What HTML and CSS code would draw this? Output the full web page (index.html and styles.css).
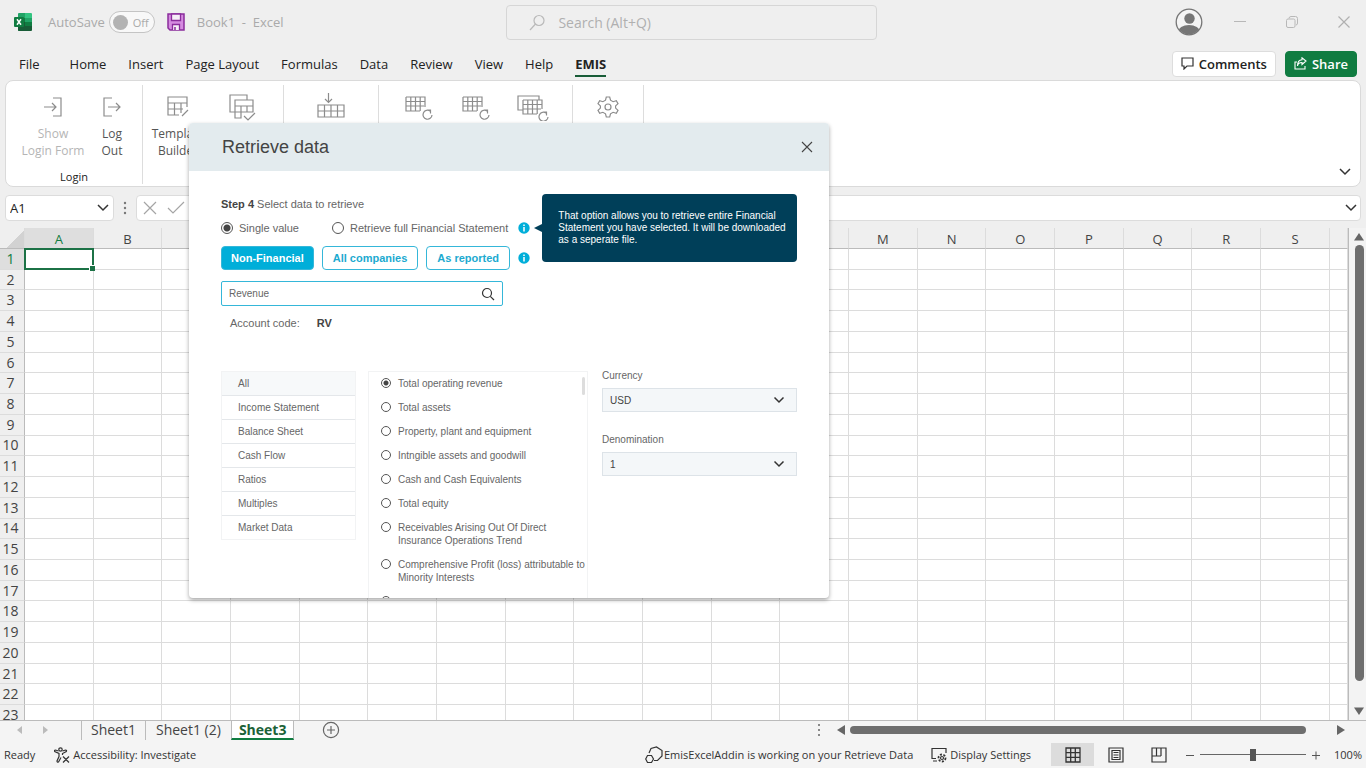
FILE: index.html
```html
<!DOCTYPE html>
<html lang="en">

    <head>
        <meta charset="UTF-8">
        <meta name="viewport" content="width=device-width, initial-scale=1.0">
        <title>Book1 - Excel</title>
        <link rel="stylesheet" href="styles.css">
    </head>

    <body>
        <header class="titlebar">
            <svg class="logo" width="18" height="18" viewBox="0 0 18 18">
                <path d="M5 0h6v18H5a1 1 0 0 1-1-1V1a1 1 0 0 1 1-1z" fill="#21a366"/>
                <path d="M11 0h6a1 1 0 0 1 1 1v4h-7z" fill="#33c481"/>
                <path d="M4 5h7v4H4z" fill="#107c41"/>
                <path d="M11 5h7v4h-7z" fill="#21a366"/>
                <path d="M4 9h7v9H5a1 1 0 0 1-1-1z" fill="#185c37"/>
                <path d="M11 9h7v4h-7z" fill="#107c41"/>
                <path d="M11 13h7v4a1 1 0 0 1-1 1h-6z" fill="#185c37"/>
                <rect y="4" width="10" height="10" rx="1" fill="#107c41"/>
                <path d="M3 6.200l4 5.600M7 6.200l-4 5.600" stroke="#fff" stroke-width="1.500"/>
            </svg>
            <span class="autosave">AutoSave</span>
            <button class="toggle" aria-label="Turn AutoSave on"><span class="knob"></span>Off</button>
            <button class="save" aria-label="Save">
                <svg width="18" height="18" viewBox="0 0 18 18">
                    <path d="M1 1h16v16H3l-2-2z" fill="#d58be0" stroke="#8b2d9c" stroke-width="1.500"/>
                    <path d="M4.500 1h9v6.500h-9z" fill="#f6eef7" stroke="#8b2d9c" stroke-width="1.300"/>
                    <path d="M5.500 17v-5.500h7V17" fill="#f6eef7" stroke="#8b2d9c" stroke-width="1.300"/>
                    <path d="M8 14v3" stroke="#8b2d9c" stroke-width="1.500"/>
                </svg>
            </button>
            <span class="book">Book1&nbsp; - &nbsp;Excel</span>
            <label class="search">
                <svg width="17" height="17" viewBox="0 0 17 17" fill="none" stroke="#b9b9b9" stroke-width="1.200">
                    <circle cx="10" cy="6.500" r="5"/>
                    <path d="M6.500 10L1 16"/>
                </svg>
                <input type="search" placeholder="Search (Alt+Q)" aria-label="Search">
            </label>
            <div class="window">
                <button aria-label="Account">
                    <svg width="28" height="28" viewBox="0 0 28 28">
                        <clipPath id="face"><circle cx="14" cy="14" r="12.500"/></clipPath>
                        <circle cx="14" cy="14" r="12.800" fill="#f4f4f4" stroke="#767676" stroke-width="1.300"/>
                        <circle cx="14.500" cy="10.500" r="5.200" fill="#767676"/>
                        <ellipse cx="14" cy="24" rx="11" ry="7" fill="#767676" clip-path="url(#face)"/>
                    </svg>
                </button>
                <button aria-label="Minimize"><svg width="12" height="12" viewBox="0 0 12 12" stroke="#b8b8b8"><path d="M0 5.500h12"/></svg></button>
                <button aria-label="Restore">
                    <svg width="12" height="12" viewBox="0 0 12 12" fill="none" stroke="#b8b8b8">
                        <rect x=".5" y="3" width="8.500" height="8.500" rx="1.500"/>
                        <path d="M3 2.500Q3 .5 5 .5h4.500q2 0 2 2V7q0 2-1.500 2"/>
                    </svg>
                </button>
                <button aria-label="Close"><svg width="12" height="12" viewBox="0 0 12 12" stroke="#b0b0b0" stroke-width="1.200"><path d="M.5.5l11 11M11.500.5l-11 11"/></svg></button>
            </div>
        </header>

        <nav class="tabs">
            <a href="#" class="file">File</a>
            <a href="#">Home</a>
            <a href="#">Insert</a>
            <a href="#">Page Layout</a>
            <a href="#">Formulas</a>
            <a href="#">Data</a>
            <a href="#">Review</a>
            <a href="#">View</a>
            <a href="#">Help</a>
            <a href="#" class="current">EMIS</a>
            <button class="comments">
                <svg width="13" height="13" viewBox="0 0 13 13" fill="none" stroke="#333" stroke-width="1.200"><path d="M1 1h11v8H6l-3 3V9H1z"/></svg>
                Comments
            </button>
            <button class="share">
                <svg width="13" height="13" viewBox="0 0 13 13" fill="none" stroke="#fff" stroke-width="1.100"><path d="M3 5H1v7h10V9M3.500 9Q4 5.500 8 5.500V7.500L12 4 8 .8V2.800Q3.500 3 3.500 9z"/></svg>
                Share
            </button>
        </nav>

        <section class="ribbon">
            <div class="group login">
                <div class="tools">
                    <button class="tool wide" disabled>
                        <svg width="28" height="28" viewBox="0 0 28 28"><path d="M14 5h8v18h-8M5 14h12M13 10l4 4-4 4"/></svg>
                        Show<br>Login Form
                    </button>
                    <button class="tool slim">
                        <svg width="28" height="28" viewBox="0 0 28 28"><path d="M14 5H6v18h8M10 14h12M18 10l4 4-4 4"/></svg>
                        Log<br>Out
                    </button>
                </div>
                <div class="name">Login</div>
            </div>
            <div class="group">
                <div class="tools">
                    <button class="tool">
                        <svg width="28" height="28" viewBox="0 0 28 28"><path d="M4 4h19v6H4zM4 10v12h11M4 16h15M10.500 10v12M17 10v10M23 10v4M18 23l6-6"/></svg>
                        Template<br>Builder
                    </button>
                    <button class="tool" aria-label="Templates">
                        <svg width="28" height="28" viewBox="0 0 28 28"><path d="M7 19H2V2h17v5M7 7h18v6H7zM7 13v6h18v-6M13 13v6M19 13v6M7 19v6h6v-6M16 23l4 4 7-7"/></svg>
                    </button>
                </div>
            </div>
            <div class="group">
                <div class="tools">
                    <button class="tool" aria-label="Retrieve data">
                        <svg width="28" height="28" viewBox="0 0 28 28"><path d="M1 12h26v12H1zM1 18h26M7.500 12v12M14 12v12M20.500 12v12M11.500 0v9M8 6l3.500 3.500L15 6"/></svg>
                    </button>
                </div>
            </div>
            <div class="group">
                <div class="tools">
                    <button class="tool mid" aria-label="Refresh cell">
                        <svg width="28" height="28" viewBox="0 0 28 28"><path d="M1 4h19v10M1 4v14h14M1 8.500h19M1 13h18M5.800 4v14M10.500 4v14M15.200 4v14M25 18a4.500 4.500 0 1 0 2 4M22 17h3.500v3.500"/></svg>
                    </button>
                    <button class="tool mid" aria-label="Refresh sheet">
                        <svg width="28" height="28" viewBox="0 0 28 28"><path d="M1 4h19v10M1 4v14h14M1 8.500h19M1 13h18M5.800 4v14M10.500 4v14M15.200 4v14M25 18a4.500 4.500 0 1 0 2 4M22 17h3.500v3.500"/></svg>
                    </button>
                    <button class="tool mid" aria-label="Refresh workbook">
                        <svg width="32" height="28" viewBox="0 0 32 28"><path d="M6 17H1V3h21v4M6 7h19v9M6 7v14h14M6 11.500h19M6 16h18M10.800 7v14M15.500 7v14M20.200 7v14M29 20a4.500 4.500 0 1 0 2 4M26 19h3.500v3.500"/></svg>
                    </button>
                </div>
            </div>
            <div class="group">
                <div class="tools">
                    <button class="tool" aria-label="Settings">
                        <svg class="gear" width="28" height="28" viewBox="0 0 28 28"><circle cx="14" cy="14" r="3"/><path d="M12.300 4h3.400l.8 3.200 2.600 1.500 3.200-1 1.700 3-2.400 2.200v2.200l2.400 2.200-1.700 3-3.200-1-2.600 1.500-.8 3.200h-3.400l-.8-3.200-2.600-1.500-3.200 1-1.700-3 2.400-2.200v-2.200L4 10.700l1.700-3 3.200 1 2.600-1.500z"/></svg>
                    </button>
                </div>
            </div>
            <button class="collapse" aria-label="Collapse ribbon"><svg width="12" height="8" viewBox="0 0 12 8" fill="none" stroke="#333" stroke-width="1.500"><path d="M1 1l5 5 5-5"/></svg></button>
        </section>

        <section class="formula">
            <label class="namebox">
                <input type="text" value="A1" aria-label="Name box">
                <svg width="12" height="8" viewBox="0 0 12 8" fill="none" stroke="#333" stroke-width="1.500"><path d="M1 1l5 5 5-5"/></svg>
            </label>
            <svg width="4" height="14" viewBox="0 0 4 14" fill="#777"><circle cx="2" cy="2" r="1.200"/><circle cx="2" cy="7" r="1.200"/><circle cx="2" cy="12" r="1.200"/></svg>
            <div class="fx">
                <button aria-label="Cancel"><svg width="14" height="14" viewBox="0 0 14 14" fill="none" stroke="#a5a5a5" stroke-width="1.200"><path d="M1 1l12 12M13 1L1 13"/></svg></button>
                <button aria-label="Enter"><svg width="18" height="14" viewBox="0 0 18 14" fill="none" stroke="#a5a5a5" stroke-width="1.200"><path d="M1 7l5 5L17 1"/></svg></button>
                <input type="text" aria-label="Formula bar">
                <svg width="12" height="8" viewBox="0 0 12 8" fill="none" stroke="#333" stroke-width="1.500"><path d="M1 1l5 5 5-5"/></svg>
            </div>
        </section>

        <main class="sheet">
            <div class="cells">
                <table id="grid"></table>
            </div>
            <div class="vscroll">
                <svg width="10" height="8" viewBox="0 0 10 8"><path d="M5 0l5 7.500H0z"/></svg>
                <div class="bar"></div>
                <svg width="10" height="8" viewBox="0 0 10 8"><path d="M0 .5h10L5 8z"/></svg>
            </div>
        </main>

        <section class="sheets">
            <div class="arrows">
                <svg width="6" height="8" viewBox="0 0 6 8"><path d="M5 0v8L0 4z"/></svg>
                <svg width="6" height="8" viewBox="0 0 6 8"><path d="M1 0v8l5-4z"/></svg>
            </div>
            <button class="page">Sheet1</button>
            <button class="page">Sheet1 (2)</button>
            <button class="page active">Sheet3</button>
            <button class="add" aria-label="New sheet"><svg width="18" height="18" viewBox="0 0 18 18" fill="none" stroke="#666" stroke-width="1.200"><circle cx="9" cy="9" r="7.600"/><path d="M9 5v8M5 9h8"/></svg></button>
            <div class="hscroll">
                <svg width="4" height="14" viewBox="0 0 4 14"><circle cx="2" cy="2" r="1"/><circle cx="2" cy="7" r="1"/><circle cx="2" cy="12" r="1"/></svg>
                <svg class="prev" width="8" height="10" viewBox="0 0 8 10"><path d="M8 0v10L0 5z"/></svg>
                <div class="bar"></div>
                <svg class="next" width="8" height="10" viewBox="0 0 8 10"><path d="M0 0v10l8-5z"/></svg>
            </div>
        </section>

        <footer class="status">
            <span>Ready</span>
            <span class="access">
                <svg width="16" height="16" viewBox="0 0 16 16" fill="none" stroke="#333" stroke-width="1.200"><circle cx="6.500" cy="2.500" r="1.700"/><path d="M4.500 4L1.500 3q-1.500 0-.8 1.500L5 6.500v3L3 14q0 1.500 1.500 1L7 10.500M8.500 4l3-1q1.500 0 .8 1.500L8.500 6.500V8M9 9.500l6 6M15 9.500l-6 6"/></svg>
                Accessibility: Investigate
            </span>
            <span class="addin">
                <svg width="18" height="18" viewBox="0 0 18 18" fill="none" stroke="#333" stroke-width="1.200"><path d="M4 7l2-4.500L11.500 1 17 4.500V10l-4.500 4.500H9"/><path d="M2.500 9.500h4L8.500 13l-2 3.500h-4L.7 13z"/></svg>
                EmisExcelAddin is working on your Retrieve Data
            </span>
            <span class="display">
                <svg width="16" height="16" viewBox="0 0 16 16" fill="none" stroke="#333" stroke-width="1.200"><path d="M5 11.500H1v-10h14V6M2 14h4"/><circle cx="11" cy="11" r="3.500" stroke-width="1.800" stroke-dasharray="2 1.500"/><circle cx="11" cy="11" r="1.500"/></svg>
                Display Settings
            </span>
            <button class="view on" aria-label="Normal"><svg width="16" height="16" viewBox="0 0 16 16" fill="none" stroke="#333" stroke-width="1.300"><path d="M1 1h14v14H1zM1 5.700h14M1 10.300h14M5.700 1v14M10.300 1v14"/></svg></button>
            <button class="view" aria-label="Page layout"><svg width="16" height="16" viewBox="0 0 16 16" fill="none" stroke="#333" stroke-width="1.200"><path d="M1 1h14v14H1zM4 3.500h8v9H4zM5.500 5.500h5M5.500 8h5M5.500 10.500h5"/></svg></button>
            <button class="view" aria-label="Page break preview"><svg width="16" height="16" viewBox="0 0 16 16" fill="none" stroke="#333" stroke-width="1.200"><path d="M1 1h14v14H1zM5.500 1v8M10 1v8M1 9h9"/></svg></button>
            <button class="step" aria-label="Zoom out"><svg width="10" height="10" viewBox="0 0 10 10" stroke="#555"><path d="M1 5.500h8"/></svg></button>
            <input class="zoom" type="range" aria-label="Zoom">
            <button class="step" aria-label="Zoom in"><svg width="10" height="10" viewBox="0 0 10 10" stroke="#555"><path d="M1 5.500h8M5 1.500v8"/></svg></button>
            <span class="percent">100%</span>
        </footer>

        <div class="dialog" role="dialog" aria-labelledby="heading">
            <div class="head">
                <h1 id="heading">Retrieve data</h1>
                <button aria-label="Close dialog"><svg width="12" height="12" viewBox="0 0 12 12" stroke="#444" stroke-width="1.100"><path d="M1 1l10 10M11 1L1 11"/></svg></button>
            </div>
            <div class="content">
                <p class="steps"><b>Step 4</b> Select data to retrieve</p>
                <div class="modes">
                    <label class="mode"><input type="radio" name="mode" checked>Single value</label>
                    <label class="mode"><input type="radio" name="mode">Retrieve full Financial Statement</label>
                    <span class="info">
                        <svg width="12" height="12" viewBox="0 0 12 12"><circle cx="6" cy="6" r="5.700" fill="#00aed9"/><path d="M6 2.500v1.500M6 5v4.500" stroke="#fff" stroke-width="1.500"/></svg>
                        <span class="tooltip">That option allows you to retrieve entire Financial Statement you have selected. It will be downloaded as a seperate file.</span>
                    </span>
                </div>
                <div class="filters">
                    <button class="filter on">Non-Financial</button>
                    <button class="filter">All companies</button>
                    <button class="filter">As reported</button>
                    <svg width="12" height="12" viewBox="0 0 12 12"><circle cx="6" cy="6" r="5.700" fill="#00aed9"/><path d="M6 2.500v1.500M6 5v4.500" stroke="#fff" stroke-width="1.500"/></svg>
                </div>
                <label class="find">
                    <input type="text" value="Revenue" aria-label="Account">
                    <svg width="14" height="14" viewBox="0 0 14 14" fill="none" stroke="#333" stroke-width="1.200"><circle cx="6" cy="6" r="4.500"/><path d="M9.300 9.300l3.700 3.700"/></svg>
                </label>
                <p class="code">Account code: <b>RV</b></p>
                <div class="panels">
                    <ul class="cats">
                        <li><a href="#" class="on">All</a></li>
                        <li><a href="#">Income Statement</a></li>
                        <li><a href="#">Balance Sheet</a></li>
                        <li><a href="#">Cash Flow</a></li>
                        <li><a href="#">Ratios</a></li>
                        <li><a href="#">Multiples</a></li>
                        <li><a href="#">Market Data</a></li>
                    </ul>
                    <div class="accounts">
                        <label><input type="radio" name="acc" checked>Total operating revenue</label>
                        <label><input type="radio" name="acc">Total assets</label>
                        <label><input type="radio" name="acc">Property, plant and equipment</label>
                        <label><input type="radio" name="acc">Intngible assets and goodwill</label>
                        <label><input type="radio" name="acc">Cash and Cash Equivalents</label>
                        <label><input type="radio" name="acc">Total equity</label>
                        <label><input type="radio" name="acc">Receivables Arising Out Of Direct Insurance Operations Trend</label>
                        <label><input type="radio" name="acc">Comprehensive Profit (loss) attributable to Minority Interests</label>
                        <label><input type="radio" name="acc" aria-label="Next account"></label>
                        <div class="thumb"></div>
                    </div>
                    <div class="options">
                        <label for="currency">Currency</label>
                        <div class="select">
                            <select id="currency"><option>USD</option></select>
                            <svg width="12" height="8" viewBox="0 0 12 8" fill="none" stroke="#333" stroke-width="1.500"><path d="M1.500 1.500L6 6l4.500-4.500"/></svg>
                        </div>
                        <label for="denomination">Denomination</label>
                        <div class="select">
                            <select id="denomination"><option>1</option></select>
                            <svg width="12" height="8" viewBox="0 0 12 8" fill="none" stroke="#333" stroke-width="1.500"><path d="M1.500 1.500L6 6l4.500-4.500"/></svg>
                        </div>
                    </div>
                </div>
            </div>
        </div>

        <script>
        const grid = document.getElementById('grid')
        const cols = 'ABCDEFGHIJKLMNOPQRS'.split('')

        // column letters
        let head = '<tr><th class="corner"></th>'
        for (let i = 0; i < cols.length; i++) {
            head += `<th${i == 0 ? ' class="picked"' : ''}>${cols[i]}</th>`
        }
        head += '<th class="rest"></th></tr>'

        // numbered rows
        let rows = ''
        for (let r = 1; r <= 23; r++) {
            rows += `<tr><th${r == 1 ? ' class="picked"' : ''}>${r}</th>`
            for (let c = 0; c <= cols.length; c++) {
                rows += r == 1 && c == 0 ? '<td class="cell"><span></span></td>' : '<td></td>'
            }
            rows += '</tr>'
        }
        grid.innerHTML = `<thead>${head}</thead><tbody>${rows}</tbody>`
        </script>
    </body>

</html>
```
FILE: styles.css
```css
* {
    box-sizing: border-box;
}

body {
    margin: 0;
    height: 100vh;
    display: flex;
    flex-direction: column;
    overflow: hidden;
    position: relative;
    background-color: #efefef;
    color: #222;
    font-family: "Open Sans", "Noto Sans", sans-serif;
    font-size: 13px;
}

button,
input,
select {
    font: inherit;
    color: inherit;
    background: none;
    border: none;
    padding: 0;
    margin: 0;
    outline: none;
}

button {
    cursor: pointer;
}

a {
    color: inherit;
    text-decoration: none;
}

svg {
    display: block;
    flex: none;
}

/* title bar */
.titlebar {
    height: 44px;
    display: flex;
    align-items: center;
    padding: 0 16px 0 14px;
    color: #aaa;
    position: relative;
}

.autosave {
    margin: 0 4px 0 16px;
}

.toggle {
    width: 46px;
    height: 22px;
    display: flex;
    align-items: center;
    gap: 5px;
    padding: 0 3px;
    font-size: 11px;
    border: 1px solid #c4c4c4;
    border-radius: 11px;
    background-color: #f8f8f8;
}

.knob {
    width: 15px;
    height: 15px;
    border-radius: 50%;
    background-color: #b3b3b3;
}

.save {
    margin: 0 12px;
}

.search {
    position: absolute;
    left: calc(37% + 1px);
    width: 371px;
    height: 35px;
    display: flex;
    align-items: center;
    gap: 12px;
    padding: 0 22px;
    font-size: 14px;
    border: 1px solid #d6d6d6;
    border-radius: 4px;
}

.search input {
    flex: 1;
}

.search input::placeholder {
    color: #b0b0b0;
}

.window {
    display: flex;
    align-items: center;
    gap: 40px;
    margin-left: auto;
}

.window button:first-child {
    margin-right: -9px;
}

/* menu */
.tabs {
    height: 36px;
    display: flex;
    align-items: center;
    gap: 22px;
    padding: 3px 9px 0 19px;
}

.tabs a {
    height: 27px;
    line-height: 19px;
    padding-top: 5px;
    border-bottom: 2px solid transparent;
}

.tabs .file {
    margin-right: 8px;
}

.tabs .current {
    font-weight: 700;
    border-color: #185c37;
}

.comments,
.share {
    height: 26px;
    display: flex;
    align-items: center;
    gap: 5px;
    padding: 0 8px;
    font-weight: 600;
    border: 1px solid #ddd;
    border-radius: 4px;
    background-color: white;
}

.comments {
    margin-left: auto;
}

.share {
    margin-left: -13px;
    color: white;
    border-color: #107c41;
    background-color: #107c41;
}

/* ribbon */
.ribbon {
    height: 107px;
    margin: 0 5px;
    display: flex;
    padding: 4px 0 2px;
    border: 1px solid #dadada;
    border-radius: 8px;
    background-color: white;
}

.group {
    display: flex;
    flex-direction: column;
    justify-content: space-between;
    padding: 0 3px;
    border-right: 1px solid #ddd;
}

.login {
    padding: 0 9px;
}

.tools {
    display: flex;
    align-items: flex-start;
    padding: 0 6px 0 0;
}

.group:nth-child(1) .tools,
.group:nth-child(5) .tools {
    padding: 0;
}

.group:nth-child(3) .tools {
    padding: 0 12px;
}

.group:nth-child(4) .tools {
    padding: 0 8px;
}

.tool {
    width: 64px;
    padding-top: 8px;
    line-height: 17px;
    font-size: 12px;
    color: #555;
}

.tool svg {
    margin: 0 auto 4px;
    fill: none;
    stroke: #8c8c8c;
    stroke-width: 1.200;
}

.tool:disabled {
    color: #b5b5b5;
}

.wide {
    width: 76px;
}

.slim {
    width: 42px;
}

.mid {
    width: 57px;
}

.name {
    font-size: 11px;
    text-align: center;
}

.collapse {
    margin: auto 9px 8px auto;
}

/* formula bar */
.formula {
    height: 41px;
    display: flex;
    align-items: center;
    gap: 9px;
    padding: 0 5px;
}

.namebox,
.fx {
    height: 26px;
    display: flex;
    align-items: center;
    padding: 0 4px;
    border: 1px solid #dcdcdc;
    border-radius: 4px;
    background-color: white;
}

.namebox {
    width: 109px;
}

.namebox input {
    width: 87px;
}

.fx {
    flex: 1;
    gap: 10px;
    padding: 0 3px 0 6px;
}

.fx input {
    flex: 1;
}

/* cells */
.sheet {
    flex: 1;
    min-height: 0;
    display: flex;
}

.cells {
    flex: 1;
    overflow: hidden;
    border-right: 1px solid #bbb;
}

.cells table {
    width: 100%;
    height: calc(100% + 6px);
    table-layout: fixed;
    border-collapse: separate;
    border-spacing: 0;
}

.cells th,
.cells td {
    padding: 0;
    border-right: 1px solid #dcdcdc;
    border-bottom: 1px solid #dcdcdc;
    background-color: white;
}

.cells th {
    font-size: 14px;
    font-weight: 400;
    line-height: 16px;
    color: #444;
    background-color: #efefef;
}

.cells thead th {
    height: 20px;
    font-size: 13px;
    line-height: 18px;
    padding-top: 2px;
    border-bottom-color: #bbb;
}

.cells tbody th {
    padding-right: 3px;
    border-right-color: #bbb;
}

.cells .corner {
    width: 25px;
    background-image: linear-gradient(135deg, transparent 60%, #d2d2d2 60%);
}

.cells .rest {
    width: 18px;
}

.cells th.picked {
    color: #107c41;
    background-color: #dedede;
}

.cell {
    position: relative;
}

/* selection frame and its handle */
.cell span {
    position: absolute;
    inset: -1px;
    border: 2px solid #1c7246;
}

.cell span::after {
    content: "";
    position: absolute;
    right: -3px;
    bottom: -3px;
    width: 5px;
    height: 5px;
    border: 1px solid white;
    border-width: 1px 0 0 1px;
    background-color: #1c7246;
}

.vscroll {
    width: 17px;
    display: flex;
    flex-direction: column;
    align-items: center;
    gap: 4px;
    padding: 5px 1px 5px 4px;
    fill: #666;
    background-color: #f3f3f3;
}

.vscroll .bar {
    flex: 1;
    width: 9px;
    margin-bottom: 22px;
    border-radius: 5px;
    background-color: #6e6e6e;
}

/* sheet tabs */
.sheets {
    height: 23px;
    display: flex;
    align-items: flex-start;
    border-top: 1px solid #bbb;
    background-color: #f4f4f4;
    font-size: 14px;
    color: #444;
}

.arrows {
    width: 81px;
    display: flex;
    gap: 19px;
    padding: 5px 17px;
    fill: #bbb;
}

.page {
    height: 19px;
    line-height: 15px;
    padding: 0 9px 3px;
    border-left: 1px solid #bbb;
}

.page + .page {
    padding: 0 10px 3px;
}

.page.active {
    padding: 0 7px 1px;
    color: #1c6238;
    font-weight: 700;
    border-right: 1px solid #bbb;
    border-bottom: 2px solid #107c41;
    background-color: white;
}

.add {
    margin-left: 28px;
}

.hscroll {
    width: calc(41% + 7px);
    height: 17px;
    display: flex;
    align-items: center;
    margin-left: auto;
    padding: 0 21px 0 18px;
    fill: #666;
}

.hscroll .prev {
    margin: 0 5px 0 16px;
}

.hscroll .bar {
    flex: 1;
    height: 8px;
    border-radius: 4px;
    background-color: #6e6e6e;
}

.hscroll .next {
    margin-left: 31px;
}

/* status bar */
.status {
    height: 25px;
    display: flex;
    align-items: center;
    padding: 0 4px 2px;
    font-size: 11px;
    color: #333;
    background-color: #f4f4f4;
}

.access,
.addin,
.display {
    display: flex;
    align-items: center;
    gap: 3px;
}

.access {
    margin-left: 19px;
}

.addin {
    gap: 1px;
    margin-left: auto;
}

.display {
    margin: 0 20px 0 18px;
}

.view {
    width: 43px;
    height: 23px;
    display: flex;
    align-items: center;
    justify-content: center;
}

.view.on {
    background-color: #dcdcdc;
}

.step {
    margin: 0 5px;
}

.zoom {
    appearance: none;
    width: 106px;
    height: 12px;
    background: linear-gradient(#666, #666) center / 100% 1px no-repeat;
}

.zoom::-webkit-slider-thumb {
    appearance: none;
    width: 6px;
    height: 12px;
    background-color: #555;
}

.percent {
    margin-left: 8px;
}

/* retrieve data dialog */
.dialog {
    position: absolute;
    left: 189px;
    top: 123px;
    width: 640px;
    height: 475px;
    display: flex;
    flex-direction: column;
    border-radius: 4px;
    background-color: white;
    box-shadow: 0 2px 4px rgba(0, 0, 0, 0.35);
    font-family: "Liberation Sans", Arial, sans-serif;
    font-size: 11px;
    color: #666;
}

.head {
    height: 48px;
    display: flex;
    align-items: center;
    justify-content: space-between;
    padding: 0 16px 0 33px;
    border-radius: 4px 4px 0 0;
    background-color: #e3ebee;
}

.head h1 {
    margin: 0;
    font-size: 18px;
    font-weight: 400;
    color: #444;
}

.content {
    flex: 1;
    min-height: 0;
    display: flex;
    flex-direction: column;
    padding: 25px 32px 0;
}

.steps {
    margin: 0;
    line-height: 16px;
}

.steps b,
.code b {
    color: #444;
}

.modes {
    height: 24px;
    display: flex;
    align-items: center;
    margin: 4px 0 6px;
}

.mode {
    display: flex;
    align-items: center;
    gap: 6px;
}

.mode + .mode {
    margin: 0 10px 0 33px;
}

.dialog input[type="radio"] {
    appearance: none;
    flex: none;
    width: 12px;
    height: 12px;
    border: 1px solid #555;
    border-radius: 50%;
}

.dialog input[type="radio"]:checked {
    background: radial-gradient(#444 3px, transparent 4px);
}

.info {
    position: relative;
}

.tooltip {
    position: absolute;
    left: 24px;
    top: -28px;
    width: 255px;
    height: 68px;
    padding: 16px 8px 16px 16px;
    line-height: 12px;
    font-size: 10px;
    color: white;
    border-radius: 4px;
    background-color: #003f59;
}

.tooltip::before {
    content: "";
    position: absolute;
    left: -8px;
    top: 30px;
    border: 4px solid transparent;
    border-left: none;
    border-right: 8px solid #003f59;
}

.filters {
    display: flex;
    align-items: center;
    gap: 8px;
}

.filter {
    height: 24px;
    padding: 0 9px;
    font-weight: 700;
    color: #1caad0;
    border: 1px solid #35b7d9;
    border-radius: 4px;
}

.filter + .filter {
    padding: 0 10px;
}

.filter.on {
    color: white;
    background-color: #00aed9;
}

.find {
    width: 282px;
    height: 25px;
    display: flex;
    align-items: center;
    margin-top: 11px;
    padding: 0 7px;
    border: 1px solid #35b7d9;
    border-radius: 2px;
    font-size: 10px;
}

.find input {
    flex: 1;
}

.code {
    margin: 9px 9px 0;
    line-height: 16px;
}

.code b {
    margin-left: 14px;
}

.panels {
    flex: 1;
    min-height: 0;
    display: flex;
    margin-top: 40px;
    font-size: 10px;
}

.cats {
    width: 135px;
    height: 169px;
    margin: 0 12px 0 0;
    padding: 0;
    list-style: none;
    border: 1px solid #f2f3f4;
}

.cats a {
    display: block;
    height: 24px;
    line-height: 24px;
    padding-left: 16px;
    border-bottom: 1px solid #e4e7ea;
}

.cats li:last-child a {
    border-bottom: none;
}

.cats .on {
    background-color: #f7f9fa;
}

.accounts {
    position: relative;
    width: 220px;
    display: flex;
    flex-direction: column;
    gap: 11px;
    padding: 5px 0 0 12px;
    overflow: hidden;
    border: 1px solid #f2f3f4;
    border-bottom: none;
}

.accounts label {
    display: flex;
    gap: 7px;
    line-height: 13px;
}

.dialog .accounts input {
    width: 10px;
    height: 10px;
    margin-top: 1px;
}

.dialog .accounts input:checked {
    background: radial-gradient(#444 2px, transparent 3px);
}

/* scroll thumb, drawn over the list */
.thumb {
    position: absolute;
    right: 2px;
    top: 5px;
    width: 3px;
    height: 18px;
    border-radius: 2px;
    background-color: #ddd;
}

.options {
    flex: 1;
    padding-left: 14px;
}

.options label {
    display: block;
    line-height: 10px;
    margin-bottom: 7px;
}

.select {
    position: relative;
    margin-bottom: 23px;
}

.select select {
    appearance: none;
    display: block;
    width: 100%;
    height: 24px;
    padding: 0 7px;
    color: #444;
    border: 1px solid #dde3e8;
    background-color: #f4f7f9;
}

.select svg {
    position: absolute;
    right: 12px;
    top: 8px;
    pointer-events: none;
}
```
